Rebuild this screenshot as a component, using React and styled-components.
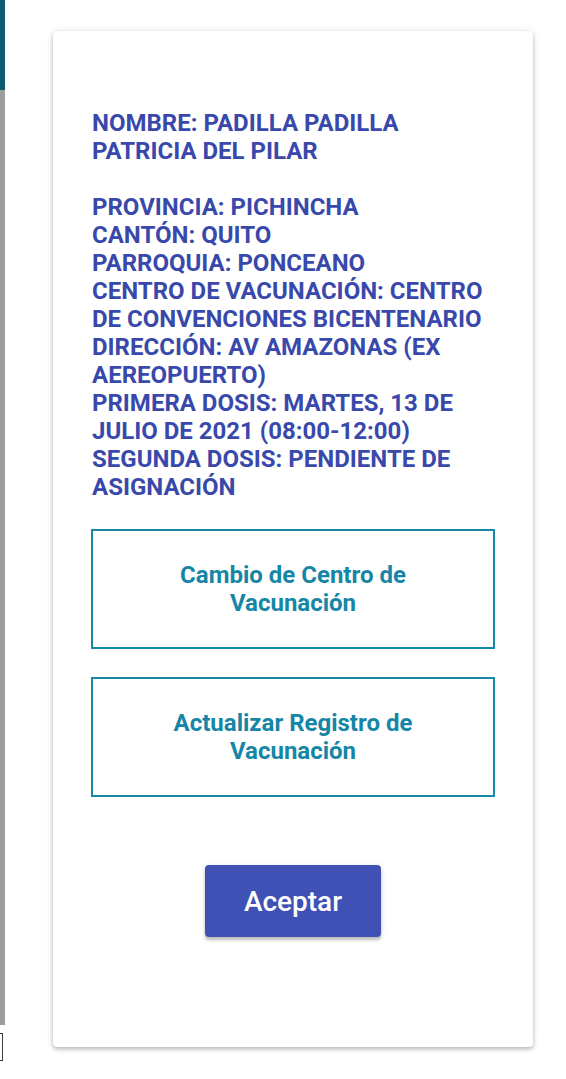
import React from "react";
import styled, { createGlobalStyle } from "styled-components";

const Global = createGlobalStyle`
  html, body { margin: 0; padding: 0; background: #ffffff; }
  body { font-family: Roboto, "Liberation Sans", Arial, sans-serif; }
`;

const Page = styled.div`
  display: flex;
  width: 566px;
  min-height: 1079px;
  background: #ffffff;
`;

const Strip = styled.div`
  width: 5px;
  display: flex;
  flex-direction: column;
  flex-shrink: 0;
`;

const StripPart = styled.div`
  height: ${(p) => p.$h}px;
  background: ${(p) => p.$c};
`;

const StripMark = styled.div`
  margin-top: 8px;
  width: 3px;
  height: 28px;
  border: 1px solid #3a3a3a;
  border-left: none;
  box-sizing: border-box;
`;

const Main = styled.div`
  flex: 1;
  padding: 31px 0 0 48px;
`;

const Card = styled.div`
  width: 480px;
  height: 1016px;
  box-sizing: border-box;
  background: #ffffff;
  border-radius: 4px;
  box-shadow: 0 2px 4px rgba(0, 0, 0, 0.28), 0 0 12px rgba(0, 0, 0, 0.06);
  padding: 78px 38px 0 38px;
  display: flex;
  flex-direction: column;
`;

const Info = styled.div`
  color: #3949ab;
  font-weight: 700;
  font-size: 24px;
  line-height: 28px;
  text-transform: uppercase;
  padding-left: 1px;
`;

const Line = styled.div`
  min-height: 28px;
`;

const OutlineButton = styled.button`
  margin-top: 28px;
  height: 120px;
  width: 404px;
  background: #ffffff;
  border: 2px solid #1788a7;
  border-radius: 0;
  color: #1586a5;
  font-family: Roboto, "Liberation Sans", Arial, sans-serif;
  font-weight: 700;
  font-size: 24px;
  line-height: 28px;
  padding: 0 50px;
  display: flex;
  align-items: center;
  justify-content: center;
  text-align: center;
  box-sizing: border-box;
`;

const ButtonRow = styled.div`
  margin-top: 68px;
  display: flex;
  justify-content: center;
  width: 404px;
`;

const PrimaryButton = styled.button`
  width: 176px;
  height: 72px;
  background: #3f51b5;
  color: #ffffff;
  border: none;
  border-radius: 4px;
  font-family: Roboto, "Liberation Sans", Arial, sans-serif;
  font-weight: 500;
  font-size: 28px;
  box-shadow: 0 3px 3px rgba(0, 0, 0, 0.22), 0 1px 6px rgba(0, 0, 0, 0.1);
`;

const lines = [
  "NOMBRE: PADILLA PADILLA",
  "PATRICIA DEL PILAR",
  "",
  "PROVINCIA: PICHINCHA",
  "CANTÓN: QUITO",
  "PARROQUIA: PONCEANO",
  "CENTRO DE VACUNACIÓN: CENTRO",
  "DE CONVENCIONES BICENTENARIO",
  "DIRECCIÓN: AV AMAZONAS (EX",
  "AEREOPUERTO)",
  "PRIMERA DOSIS: MARTES, 13 DE",
  "JULIO DE 2021 (08:00-12:00)",
  "SEGUNDA DOSIS: PENDIENTE DE",
  "ASIGNACIÓN",
];

export default function App() {
  return (
    <>
      <Global />
      <Page>
        <Strip>
          <StripPart $h={90} $c="#0d5a72" />
          <StripPart $h={935} $c="#9d9d9d" />
          <StripMark />
        </Strip>
        <Main>
          <Card>
            <Info>
              {lines.map((l, i) => (
                <Line key={i}>{l}</Line>
              ))}
            </Info>
            <OutlineButton>Cambio de Centro de Vacunación</OutlineButton>
            <OutlineButton>Actualizar Registro de Vacunación</OutlineButton>
            <ButtonRow>
              <PrimaryButton>Aceptar</PrimaryButton>
            </ButtonRow>
          </Card>
        </Main>
      </Page>
    </>
  );
}
